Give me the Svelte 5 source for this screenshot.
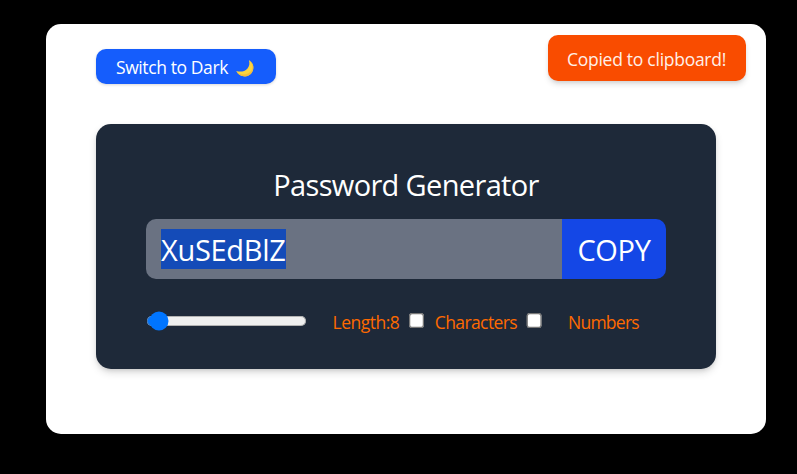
<script>
  let length = $state(8);
  let characters = $state(false);
  let numbers = $state(false);
  let password = $state('XuSEdBlZ');
</script>

<div class="page">
  <main class="panel">
    <button class="theme">
      <span class="theme-text">Switch to Dark</span>
      <svg class="moon" viewBox="0 0 18 17" width="18" height="17" aria-hidden="true">
        <path d="M12.9.3C16.2 2.3 18 5.300 17.200 9.200C16.200 14 12 16.900 7.600 16.300C4.200 15.800 1.500 13.700.300 10.900C4.300 12.300 8.700 11.500 11.300 8.700C13.500 6.300 13.900 3.200 12.900.3Z" fill="#fcd53f" />
        <path d="M.3 10.900C3 15.500 12 15.800 15.500 10.500C17.200 7.500 16.600 3.500 12.900.3C16.200 2.300 18 5.300 17.200 9.200C16.200 14 12 16.900 7.600 16.300C4.200 15.800 1.500 13.700.300 10.900Z" fill="#f3bd3c" />
      </svg>
    </button>
    <div class="toast"><span>Copied to clipboard!</span></div>

    <section class="card">
      <h1><span>Password Generator</span></h1>
      <div class="field">
        <div class="password"><span class="selected"><span class="pw">{password}</span></span></div>
        <button class="copy"><span>COPY</span></button>
      </div>
      <div class="options">
        <input class="range" type="range" min="6" max="100" bind:value={length} />
        <label class="length"><span>Length:{length}</span></label>
        <input class="check" type="checkbox" bind:checked={characters} />
        <label class="chars"><span>Characters</span></label>
        <input class="check" type="checkbox" bind:checked={numbers} />
        <label class="nums"><span>Numbers</span></label>
      </div>
    </section>
  </main>
</div>

<style>
  :global(body) { background: #000; }
  .page {
    box-sizing: border-box;
    width: 797px;
    height: 474px;
    padding: 24px 31px 40px 46px;
    background: #000;
    font-family: "Open Sans", "Noto Sans", sans-serif;
    overflow: hidden;
  }
  .panel {
    position: relative;
    box-sizing: border-box;
    height: 410px;
    padding: 25px 50px;
    border-radius: 15px;
    background: #fff;
  }
  button { border: 0; margin: 0; font-family: inherit; color: #fff; white-space: nowrap; }
  .theme {
    display: flex;
    align-items: center;
    box-sizing: border-box;
    width: 180px;
    height: 35px;
    padding: 1px 20px 0;
    border-radius: 10px;
    background: #155dfc;
    box-shadow: 0 1px 3px rgba(0, 0, 0, 0.16);
    font-size: 17.5px;
  }
  .theme-text { width: 119.5px; text-align: left; letter-spacing: -0.4px; }
  .moon { flex: none; margin-top: 2px; }
  .toast {
    position: absolute;
    left: 502px;
    top: 11px;
    display: flex;
    align-items: center;
    box-sizing: border-box;
    width: 198px;
    height: 45.500px;
    padding: 2px 0 0 19px;
    border-radius: 10px;
    background: #f94c00;
    box-shadow: 0 4px 6px -1px rgba(0, 0, 0, 0.14), 0 2px 4px -2px rgba(0, 0, 0, 0.12);
    color: #fff0e8;
    font-size: 17.5px;
    letter-spacing: -0.27px;
    white-space: nowrap;
  }
  .card {
    box-sizing: border-box;
    height: 245px;
    margin-top: 40px;
    padding: 38px 50px 0;
    border-radius: 15px;
    background: #1e2939;
    box-shadow: 0 4px 8px -1px rgba(0, 0, 0, 0.16), 0 2px 5px -2px rgba(0, 0, 0, 0.16);
  }
  h1 {
    margin: 0 0 12px;
    height: 45px;
    line-height: 45px;
    text-align: center;
    color: #fff;
    font-size: 29px;
    font-weight: 400;
    letter-spacing: -0.65px;
  }
  .field { display: flex; height: 60px; border-radius: 10px; overflow: hidden; }
  .password {
    display: flex;
    align-items: center;
    box-sizing: border-box;
    width: 416px;
    padding-left: 15px;
    background: #6a7282;
    color: #fff;
    font-size: 29px;
    letter-spacing: -0.3px;
  }
  .selected { width: 125px; height: 40px; line-height: 42px; background: #144bb8; }
  .copy {
    width: 104px;
    padding: 1px 0 0;
    background: #1447e6;
    font-size: 29px;
    letter-spacing: -0.35px;
    text-align: center;
  }
  .options {
    display: flex;
    align-items: center;
    height: 34px;
    margin-top: 25px;
    color: #ff6900;
    font-size: 17.5px;
    letter-spacing: -0.5px;
    white-space: nowrap;
  }
  .range { zoom: 1.25; width: 128.800px; margin: 0; flex: none; }
  .check { zoom: 1.25; margin: 0; flex: none; width: 13px; height: 13px; }
  label { padding-top: 2px; box-sizing: border-box; flex: none; }
  .length { width: 101.500px; padding-left: 25.5px; }
  .chars { width: 101.5px; padding-left: 10px; letter-spacing: -0.6px; }
  .nums { padding-left: 25.5px; letter-spacing: -0.75px; }
</style>
